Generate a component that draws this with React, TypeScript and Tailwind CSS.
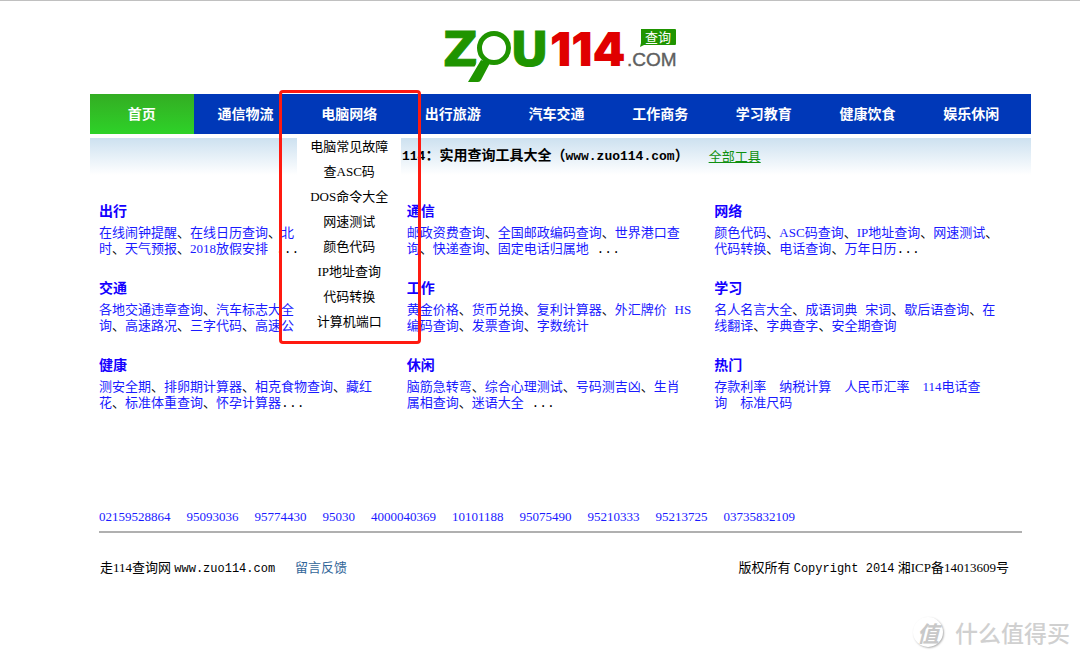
import { Fragment, ReactNode } from 'react'

interface Category {
  title: string
  lines: string[][]
}

const navItems = ['首页', '通信物流', '电脑网络', '出行旅游', '汽车交通', '工作商务', '学习教育', '健康饮食', '娱乐休闲']

const computerMenu = ['电脑常见故障', '查ASC码', 'DOS命令大全', '网速测试', '颜色代码', 'IP地址查询', '代码转换', '计算机端口']

// Every line is a list of pieces, separators and dots stay black
const categories: Category[] = [
  { title: '出行', lines: [['在线闹钟提醒', '、', '在线日历查询', '、', '北'], ['时', '、', '天气预报', '、', '2018放假安排', ' ...']] },
  { title: '通信', lines: [['邮政资费查询', '、', '全国邮政编码查询', '、', '世界港口查'], ['询', '、', '快递查询', '、', '固定电话归属地', ' ...']] },
  { title: '网络', lines: [['颜色代码', '、', 'ASC码查询', '、', 'IP地址查询', '、', '网速测试', '、'], ['代码转换', '、', '电话查询', '、', '万年日历', '...']] },
  { title: '交通', lines: [['各地交通违章查询', '、', '汽车标志大全'], ['询', '、', '高速路况', '、', '三字代码', '、', '高速公']] },
  { title: '工作', lines: [['黄金价格', '、', '货币兑换', '、', '复利计算器', '、', '外汇牌价', ' ', 'HS'], ['编码查询', '、', '发票查询', '、', '字数统计']] },
  { title: '学习', lines: [['名人名言大全', '、', '成语词典', ' ', '宋词', '、', '歇后语查询', '、', '在'], ['线翻译', '、', '字典查字', '、', '安全期查询']] },
  { title: '健康', lines: [['测安全期', '、', '排卵期计算器', '、', '相克食物查询', '、', '藏红'], ['花', '、', '标准体重查询', '、', '怀孕计算器', '...']] },
  { title: '休闲', lines: [['脑筋急转弯', '、', '综合心理测试', '、', '号码测吉凶', '、', '生肖'], ['属相查询', '、', '迷语大全', ' ...']] },
  { title: '热门', lines: [['存款利率', '　', '纳税计算', '　', '人民币汇率', '　', '114电话查'], ['询', '　', '标准尺码']] },
]

const phones = ['02159528864', '95093036', '95774430', '95030', '4000040369', '10101188', '95075490', '95210333', '95213725', '03735832109']

const isSeparator = (text: string) => /^[、　. ]+$/.test(text)

function Mono({ children, className = '' }: { children: ReactNode; className?: string }) {
  return <span className={`font-['Liberation_Mono','Noto_Sans_CJK_SC',monospace] ${className}`}>{children}</span>
}

function Logo() {
  return (
    <svg width="236" height="60" viewBox="442 24 236 60" className="overflow-visible" role="img" aria-label="ZOU114.COM">
      <g fontFamily="'DejaVu Sans', sans-serif" fontWeight="700" fontSize="48" fill="#1f9400" stroke="#1f9400">
        <text x="442" y="66">Z</text>
        <text x="509" y="66">U</text>
      </g>
      <text x="549" y="66" fill="#e00000" fontFamily="Inter, sans-serif" fontWeight="900" fontSize="47">114</text>
      {/* magnifier */}
      <circle cx="493" cy="48" r="19" fill="#fff" />
      <path d="M478 59 L492 64 L482 83 H464 Z" fill="#fff" />
      <path d="M480 60 L489 63 L480 80 Q479 82 477 82 H467 Z" fill="#1f9400" />
      <circle cx="493" cy="48" r="14.5" fill="#fff" stroke="#1f9400" strokeWidth="5" />
      {/* badge */}
      <path d="M640 29 H674 Q675 29 675 30 V44 Q675 45 674 45 H643 L639 47 L640 43 V30 Z" fill="#1f9400" />
      <text x="644" y="42" fill="#fff" fontSize="13" fontFamily="'Noto Sans CJK SC', sans-serif">查询</text>
      <text x="626" y="66" fill="#5f5f5f" stroke="#5f5f5f" strokeWidth="0.4" fontSize="19" fontFamily="'Liberation Sans', sans-serif">.COM</text>
    </svg>
  )
}

function NavBar() {
  return (
    <nav className="bg-[#0038b8] pr-2">
      <ul className="flex h-10 text-sm font-bold text-white">
        {navItems.map((item, index) => (
          <li key={item} className="relative flex-1">
            <a
              href="#"
              className={`flex h-full items-center justify-center pt-px ${index === 0 ? 'bg-linear-to-b from-[#33ad23] to-[#2dd228]' : ''}`}
            >
              {item}
            </a>
            {item === '电脑网络' && (
              <>
                <ul className="absolute inset-x-0 top-full z-10 bg-white text-center text-[13px] font-normal text-black">
                  {computerMenu.map((entry) => (
                    <li key={entry} className="leading-[25px]">
                      <a href="#">{entry}</a>
                    </li>
                  ))}
                </ul>
                <div className="pointer-events-none absolute -top-1 -right-5 -left-[18px] z-20 h-[254px] rounded-sm border-3 border-[#ff1a10]" />
              </>
            )}
          </li>
        ))}
      </ul>
    </nav>
  )
}

function CategoryBlock({ title, lines }: Category) {
  return (
    <section className="h-[77px]">
      <h2 className="text-sm leading-6 font-bold text-[#1400ff]">
        <a href="#">{title}</a>
      </h2>
      <div className="pt-px text-[13px] leading-4 whitespace-pre">
        {lines.map((line, lineIndex) => (
          <p key={lineIndex}>
            {line.map((piece, index) => (
              <Fragment key={index}>
                {isSeparator(piece) ? <Mono className="leading-none">{piece}</Mono> : <a href="#" className="text-[#1a1aff]">{piece}</a>}
              </Fragment>
            ))}
          </p>
        ))}
      </div>
    </section>
  )
}

export default function App() {
  return (
    <div className="relative min-h-screen border-t border-[#c0c0c0] bg-white pr-[49px] pl-[90px] font-['Liberation_Serif','Noto_Sans_CJK_SC',serif] text-black">
      <header className="flex h-[93px] justify-center pt-[23px]">
        <a href="#" className="h-[60px]">
          <Logo />
        </a>
      </header>

      <NavBar />

      <div className="mt-1 flex h-[37px] items-center gap-5 bg-linear-to-b from-[#cde1f0] to-white pl-[312px]">
        <h1 className="text-sm font-bold">
          <Mono className="text-[13px]">114</Mono>：实用查询工具大全（<Mono className="text-[13px]">www.zuo114.com</Mono>）
        </h1>
        <a href="#" className="text-[13px] text-[#109010] underline">全部工具</a>
      </div>

      <main className="px-[9px] pt-[25px]">
        <div className="grid grid-cols-3">
          {categories.map((category) => (
            <CategoryBlock key={category.title} {...category} />
          ))}
        </div>

        <div className="mt-[76px] flex gap-4 border-b-2 border-[#b0b0b0] pb-1 text-[13px] leading-5 text-[#1a1aff]">
          {phones.map((phone) => (
            <a key={phone} href="#">{phone}</a>
          ))}
        </div>
      </main>

      <footer className="flex justify-between pt-[25px] pr-[22px] pl-[10px] text-[13px] leading-5">
        <p className="flex gap-5">
          <span>走114查询网 <Mono className="text-xs">www.zuo114.com</Mono></span>
          <a href="#" className="text-[#336699]">留言反馈</a>
        </p>
        <p>
          版权所有 <Mono className="text-xs">Copyright 2014</Mono> 湘ICP备14013609号
        </p>
      </footer>

      <div className="absolute right-[10px] bottom-3 flex items-center gap-3 font-['Noto_Sans_CJK_SC',sans-serif] text-[#d0d0d0]">
        <span className="flex size-[30px] items-center justify-center rounded-full text-[22px] leading-none font-bold text-[#c8c8c8] italic shadow-[1px_1px_2px_#b0b0b0]">值</span>
        <span className="text-[23px] leading-8 font-medium">什么值得买</span>
      </div>
    </div>
  )
}
